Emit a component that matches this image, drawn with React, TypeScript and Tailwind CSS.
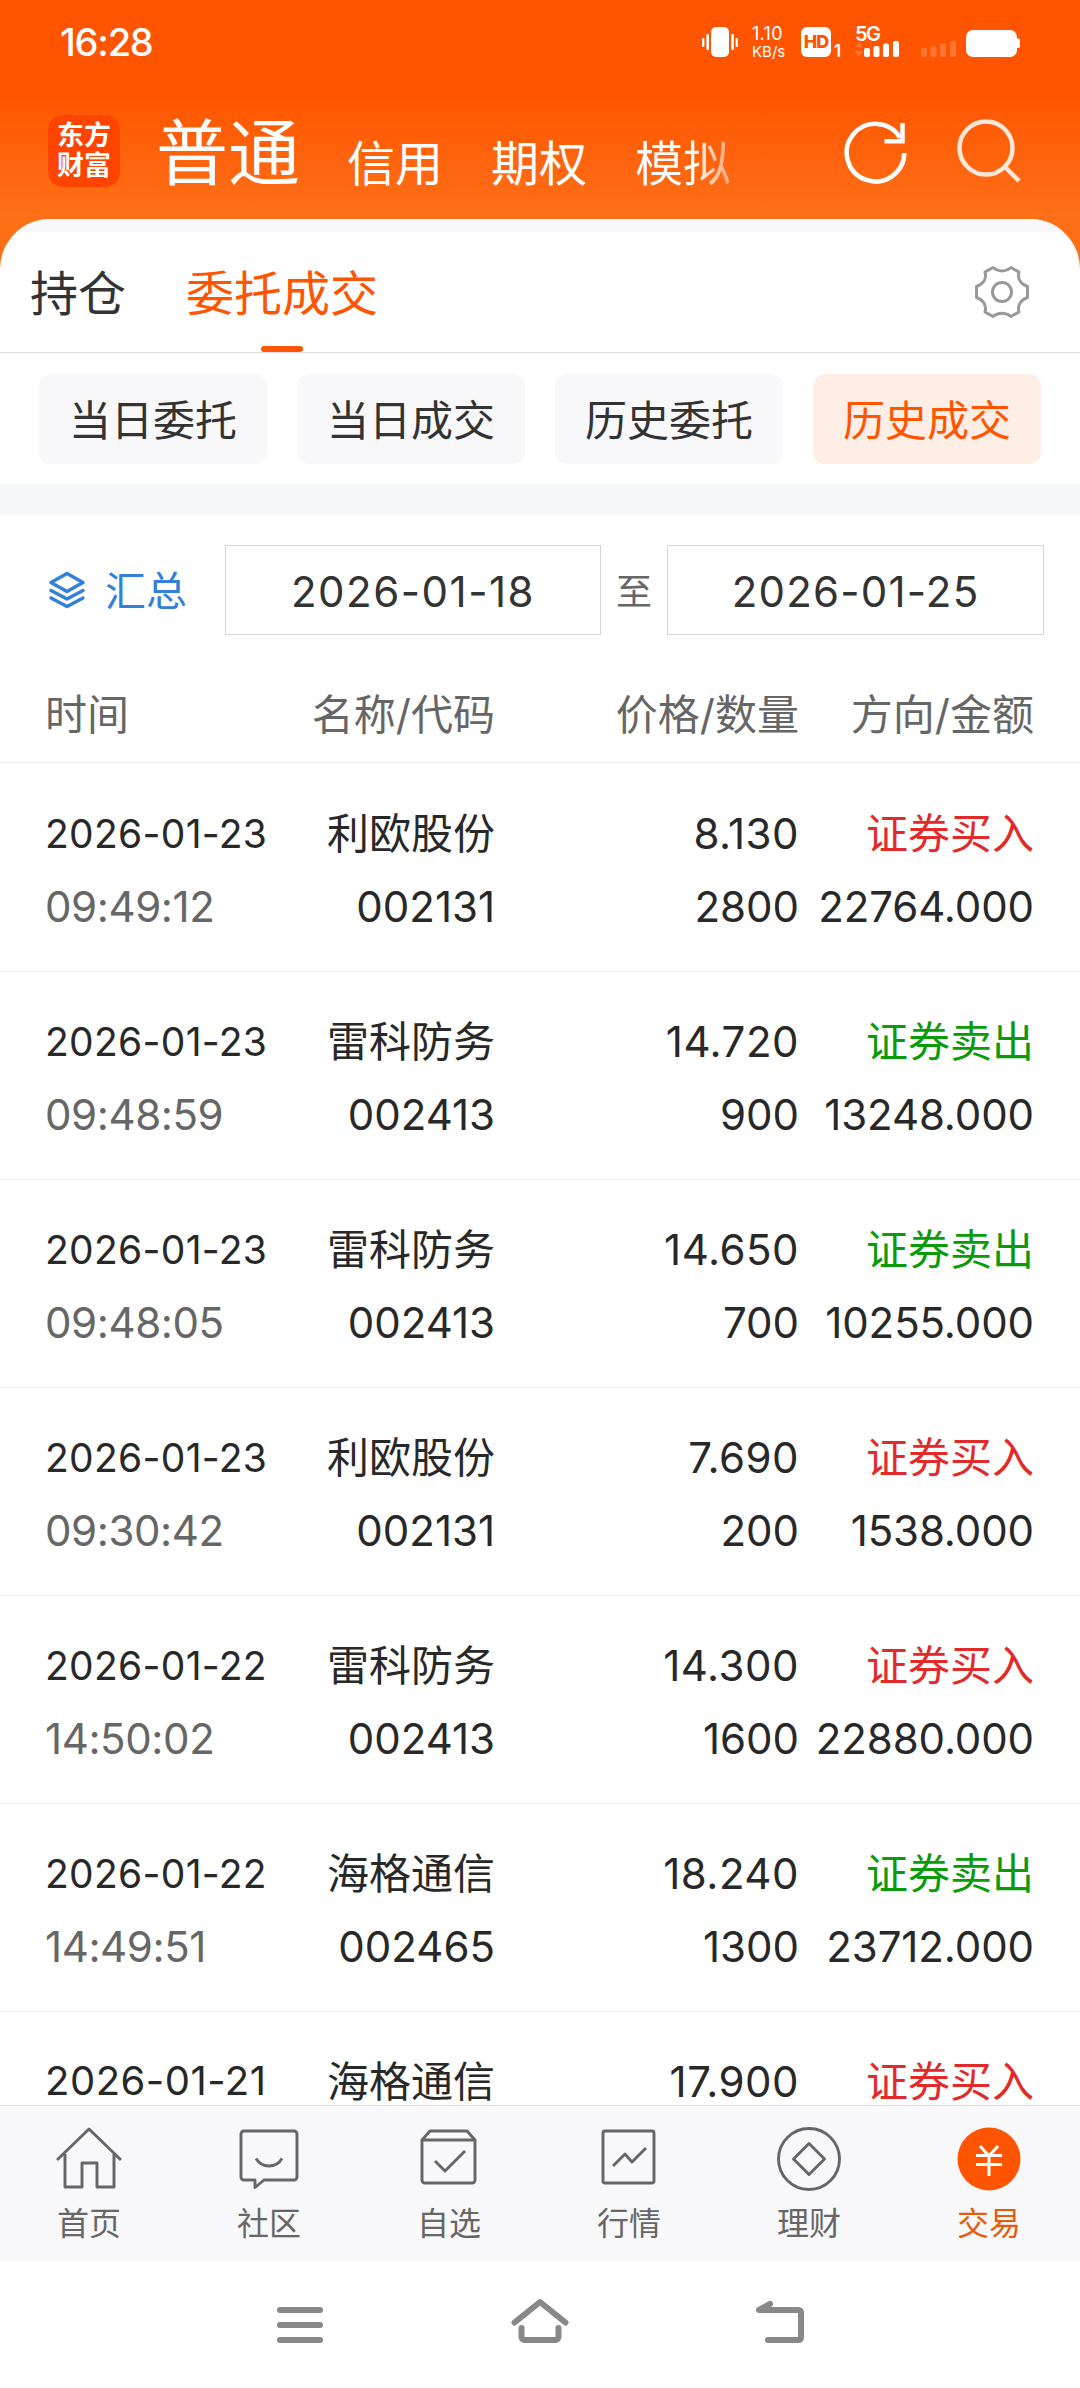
import React from 'react';

interface Trade {
  date: string;
  time: string;
  name: string;
  code: string;
  price: string;
  volume: string;
  side: 'buy' | 'sell';
  amount: string;
}

const trades: Trade[] = [
  { date: '2026-01-23', time: '09:49:12', name: '利欧股份', code: '002131', price: '8.130', volume: '2800', side: 'buy', amount: '22764.000' },
  { date: '2026-01-23', time: '09:48:59', name: '雷科防务', code: '002413', price: '14.720', volume: '900', side: 'sell', amount: '13248.000' },
  { date: '2026-01-23', time: '09:48:05', name: '雷科防务', code: '002413', price: '14.650', volume: '700', side: 'sell', amount: '10255.000' },
  { date: '2026-01-23', time: '09:30:42', name: '利欧股份', code: '002131', price: '7.690', volume: '200', side: 'buy', amount: '1538.000' },
  { date: '2026-01-22', time: '14:50:02', name: '雷科防务', code: '002413', price: '14.300', volume: '1600', side: 'buy', amount: '22880.000' },
  { date: '2026-01-22', time: '14:49:51', name: '海格通信', code: '002465', price: '18.240', volume: '1300', side: 'sell', amount: '23712.000' },
  { date: '2026-01-21', time: '', name: '海格通信', code: '', price: '17.900', volume: '', side: 'buy', amount: '' },
];

const StatusBar: React.FC = () => (
  <div className="flex h-[84px] items-center justify-between pl-[60px] pr-[60px]">
    <span className="text-[38px] leading-none font-medium tracking-[-1.2px]">16:28</span>
    <div className="flex h-[30px] items-end">
      <svg width="36" height="30" viewBox="0 0 36 30" fill="currentColor">
        <rect x="9" width="18" height="30" rx="5" />
        <rect x="0" y="11" width="2.4" height="9" rx="1" />
        <rect x="4.4" y="7" width="2.6" height="16" rx="1" />
        <rect x="29.2" y="7" width="2.6" height="16" rx="1" />
        <rect x="33.6" y="11" width="2.4" height="9" rx="1" />
      </svg>
      <div className="ml-[14px] flex h-[30px] w-[49px] flex-col justify-between">
        <span className="text-[18px] leading-[14px] tracking-[0.3px]">1.10</span>
        <span className="text-[15px] leading-[11px]">KB/s</span>
      </div>
      <div className="flex h-[30px] w-[30px] items-center justify-center rounded-[6px] bg-white text-[18px] leading-none font-extrabold tracking-[-1px] text-[#ff5500]">
        HD
      </div>
      <span className="ml-[3px] w-[21px] text-[17px] leading-[12px] font-semibold">1</span>
      <div className="flex h-[30px] w-[44px] flex-col justify-between">
        <span className="text-[20px] leading-[15px] font-semibold tracking-[-1.5px]">5G</span>
        <svg className="-mt-2" width="44" height="16" viewBox="0 0 44 16" fill="currentColor">
          <path d="M0 6.500l4-5.500 4 5.500zM0 10l4 5.500 4-5.500z" opacity="0.2" />
          <rect x="9" y="7" width="6" height="9" rx="2" />
          <rect x="18.500" y="5" width="6" height="11" rx="2" />
          <rect x="28" y="2.500" width="6" height="13.500" rx="2" />
          <rect x="38" y="0" width="6" height="16" rx="2" />
        </svg>
      </div>
      <svg className="ml-[22px]" width="35" height="16" viewBox="0 0 35 16" fill="currentColor" opacity="0.2">
        <rect x="0" y="7" width="6" height="9" rx="2" />
        <rect x="9.500" y="5" width="6" height="11" rx="2" />
        <rect x="19" y="2.500" width="6" height="13.500" rx="2" />
        <rect x="29" y="0" width="6" height="16" rx="2" />
      </svg>
      <svg className="ml-[10px]" width="54" height="27" viewBox="0 0 54 27" fill="currentColor">
        <rect width="51" height="27" rx="7" />
        <rect x="48" y="8.500" width="6" height="9.500" rx="2" />
      </svg>
    </div>
  </div>
);

const Header: React.FC = () => (
  <header className="h-[280px] shrink-0 bg-linear-to-b from-[#ff5500] from-[95px] to-[#ff6f16] to-[215px] text-white">
    <StatusBar />
    <div className="flex h-[135px] pl-[48px]">
      <div className="mt-[31px] flex h-[72px] w-[72px] flex-col items-center justify-center rounded-[15px] bg-[#ff4400] text-[27px] leading-[30px] font-bold">
        <span>东方</span>
        <span>财富</span>
      </div>
      <nav className="ml-[36px] flex h-[104px] w-[620px] items-end gap-[48px] text-[48px] leading-[48px]">
        <span className="text-[72px] leading-[70px]">普通</span>
        <span className="-ml-[1px]">信用</span>
        <span>期权</span>
        <span className="bg-linear-to-r from-white from-60% to-white/40 bg-clip-text text-transparent">模拟</span>
      </nav>
      <svg className="mt-[34px] ml-[66px]" width="66" height="66" viewBox="0 0 66 66" fill="none" stroke="currentColor" strokeWidth="4.500">
        <path d="M62.300 35A28.800 28.800 0 1 1 58 19.500" />
        <path d="M60.500 5V23.200H42.500" />
      </svg>
      <svg className="mt-[34px] ml-[48px]" width="66" height="66" viewBox="0 0 66 66" fill="none" stroke="currentColor" strokeWidth="4.500" opacity="0.85">
        <circle cx="30" cy="30" r="26.500" />
        <path d="M49 49l14 14" />
      </svg>
    </div>
  </header>
);

const GearIcon: React.FC = () => (
  <svg width="56" height="56" viewBox="-28 -28 56 56" fill="none" stroke="#999999" strokeWidth="3" strokeLinejoin="round">
    <path d="M-9-24.500L-17-20C-15-13-19-8-25.500-5.500V5.500C-19 8-15 13-17 20L-9 24.500C-4 20 4 20 9 24.500L17 20C15 13 19 8 25.500 5.500V-5.500C19-8 15-13 17-20L9-24.500C4-20-4-20-9-24.500Z" />
    <circle r="9.500" />
  </svg>
);

const Tabs: React.FC = () => (
  <div className="flex h-[121px] shrink-0 items-center justify-between border-b border-[#dddddd] pr-[50px] pl-[30px] text-[48px] leading-none">
    <div className="flex h-full gap-[60px]">
      <span className="flex h-full items-center pt-[4px] text-[#333333]">持仓</span>
      <span className="flex h-full flex-col items-center text-[#ff5500]">
        <span className="flex h-full items-center pt-[4px]">委托成交</span>
        <span className="-mt-[6px] h-[6px] w-[42px] shrink-0 rounded-full bg-[#ff5500]" />
      </span>
    </div>
    <GearIcon />
  </div>
);

const filters = ['当日委托', '当日成交', '历史委托', '历史成交'];

const Filters: React.FC = () => (
  <div className="grid h-[131px] shrink-0 grid-cols-4 content-start gap-[30px] px-[39px] pt-[21px]">
    {filters.map((label, i) => (
      <button
        key={label}
        className={`h-[90px] rounded-[12px] pt-[3px] text-[42px] leading-none ${
          i === 3 ? 'bg-[#ffeee6] text-[#ff5500]' : 'bg-[#f8f8fb] text-[#333333]'
        }`}
      >
        {label}
      </button>
    ))}
  </div>
);

const DateRange: React.FC = () => (
  <div className="flex h-[90px] shrink-0 items-center text-[42px] leading-none">
    <div className="flex w-[225px] items-center pl-[48px] text-[#3380d8]">
      <svg width="38" height="38" viewBox="0 0 38 38" fill="none" stroke="currentColor" strokeWidth="3.500" strokeLinejoin="round" strokeLinecap="round">
        <path d="M19 2.500L35 11.500 19 20.500 3 11.500Z" />
        <path d="M3 19.500l16 8.500 16-8.500" />
        <path d="M3 27l16 8.500 16-8.500" />
      </svg>
      <span className="ml-[19px] pt-[2px] text-[41px]">汇总</span>
    </div>
    <div className="flex h-full w-[376px] items-center justify-center border border-[#d6d6d6] pt-[4px] tracking-[1.5px] text-[#333333]">2026-01-18</div>
    <span className="w-[66px] pt-[3px] text-center text-[36px] text-[#666666]">至</span>
    <div className="flex h-full w-[377px] items-center justify-center border border-[#d6d6d6] pt-[4px] tracking-[1.2px] text-[#333333]">2026-01-25</div>
  </div>
);

const TradeRow: React.FC<{ trade: Trade }> = ({ trade }) => (
  <div className="grid h-[208px] shrink-0 grid-cols-[225px_225px_304px_235px] grid-rows-[72px_72px] items-center border-b border-[#ebebeb] pt-[34px] pl-[45px] text-right text-[42px] leading-none text-[#282828]">
    <span className={`-mt-[2px] text-left ${trade.date.endsWith('1') ? 'text-[40px] tracking-[0.5px]' : 'text-[39px] tracking-[0.3px]'}`}>{trade.date}</span>
    <span>{trade.name}</span>
    <span className="tracking-[0.5px]">{trade.price}</span>
    <span className={trade.side === 'buy' ? 'text-[#e22a2a]' : 'text-[#099b09]'}>
      {trade.side === 'buy' ? '证券买入' : '证券卖出'}
    </span>
    <span className="pt-[2px] text-left tracking-[-0.4px] text-[#666666]">{trade.time}</span>
    <span className="pt-[2px]">{trade.code}</span>
    <span className="pt-[2px]">{trade.volume}</span>
    <span className="pt-[2px] tracking-[-0.1px]">{trade.amount}</span>
  </div>
);

const TradeTable: React.FC = () => (
  <>
    <div className="grid h-[129px] shrink-0 grid-cols-[225px_225px_304px_235px] items-center border-b-3 border-[#f8f8f8] pt-[34px] pl-[45px] text-right text-[42px] leading-none text-[#666666]">
      <span className="text-left">时间</span>
      <span>名称/代码</span>
      <span>价格/数量</span>
      <span>方向/金额</span>
    </div>
    {trades.map((trade) => (
      <TradeRow key={trade.date + trade.time} trade={trade} />
    ))}
  </>
);

const tabItems = [
  {
    label: '首页',
    icon: <path d="M2 34L34 3l32 31M10 28v33h17V37h15v24h17V28" />,
  },
  {
    label: '社区',
    icon: <path d="M9 5h50a3 3 0 0 1 3 3v43a3 3 0 0 1-3 3H29l-9 7.500V54H9a3 3 0 0 1-3-3V8a3 3 0 0 1 3-3ZM21 32.500c6 10 20 10 26 0" />,
  },
  {
    label: '自选',
    icon: <path d="M7 14l8-9h37l8 9v40a3 3 0 0 1-3 3H10a3 3 0 0 1-3-3ZM7 14h53M20 35l10 10 20-20" />,
  },
  {
    label: '行情',
    icon: <path d="M10 5h47a2 2 0 0 1 2 2v48a2 2 0 0 1-2 2H10a2 2 0 0 1-2-2V7a2 2 0 0 1 2-2ZM18 40l12-12 7 8 14-14" />,
  },
  {
    label: '理财',
    icon: (
      <>
        <circle cx="34" cy="33" r="30.500" />
        <path d="M34 17.500L49.500 33 34 48.500 18.500 33Z" />
      </>
    ),
  },
  {
    label: '交易',
    icon: (
      <>
        <circle cx="34" cy="33" r="31.500" fill="#ff5500" stroke="none" />
        <path d="M25 20l9 10 9-10M21 29.500h26M21 38.500h26M34 29v21" stroke="#ffffff" strokeWidth="3" />
      </>
    ),
  },
];

const TabBar: React.FC = () => (
  <nav className="grid h-[157px] shrink-0 grid-cols-6 border-t border-[#dfdfe2] bg-[#f8f8fb]">
    {tabItems.map((item) => (
      <div
        key={item.label}
        className={`flex flex-col items-center pt-[20px] text-[32px] leading-none ${
          item.label === '交易' ? 'text-[#e85a0c]' : 'text-[#666666]'
        }`}
      >
        <svg className="-ml-[2px]" width="68" height="66" viewBox="0 0 68 66" fill="none" stroke="#666666" strokeWidth="2.900" strokeLinejoin="round">
          {item.icon}
        </svg>
        <span className="mt-[16px] -ml-[2px]">{item.label}</span>
      </div>
    ))}
  </nav>
);

const SystemNav: React.FC = () => (
  <div className="flex h-[126px] shrink-0 items-start justify-center gap-[180px] bg-white pt-[33px]">
    {[
      <path d="M10 15H50M10 30H50M10 45H50" />,
      <path d="M4.500 27.500L30 7 55.500 27.500M11.500 33v9a3 3 0 0 0 3 3H45.500a3 3 0 0 0 3-3V33" />,
      <path d="M20 9l-11 6H48.500a2.500 2.500 0 0 1 2.500 2.500V42.500a2.500 2.500 0 0 1-2.500 2.500H18" />,
    ].map((icon, i) => (
      <svg key={i} width="60" height="60" viewBox="0 0 60 60" fill="none" stroke="#888888" strokeWidth="6" strokeLinecap="round" strokeLinejoin="round" overflow="visible">
        {icon}
      </svg>
    ))}
  </div>
);

export default function App() {
  return (
    <div lang="zh-CN" className="flex h-[2388px] w-[1080px] flex-col overflow-hidden bg-white font-['Inter','Noto_Sans_CJK_SC',sans-serif]">
      <Header />
      <main className="-mt-[61px] flex min-h-0 flex-1 flex-col overflow-hidden rounded-t-[50px] bg-white">
        <div className="h-[13px] shrink-0 bg-[#f8f8fb]" />
        <Tabs />
        <Filters />
        <div className="mb-[30px] h-[31px] shrink-0 bg-[#f6f7fa]" />
        <DateRange />
        <TradeTable />
      </main>
      <TabBar />
      <SystemNav />
    </div>
  );
}
